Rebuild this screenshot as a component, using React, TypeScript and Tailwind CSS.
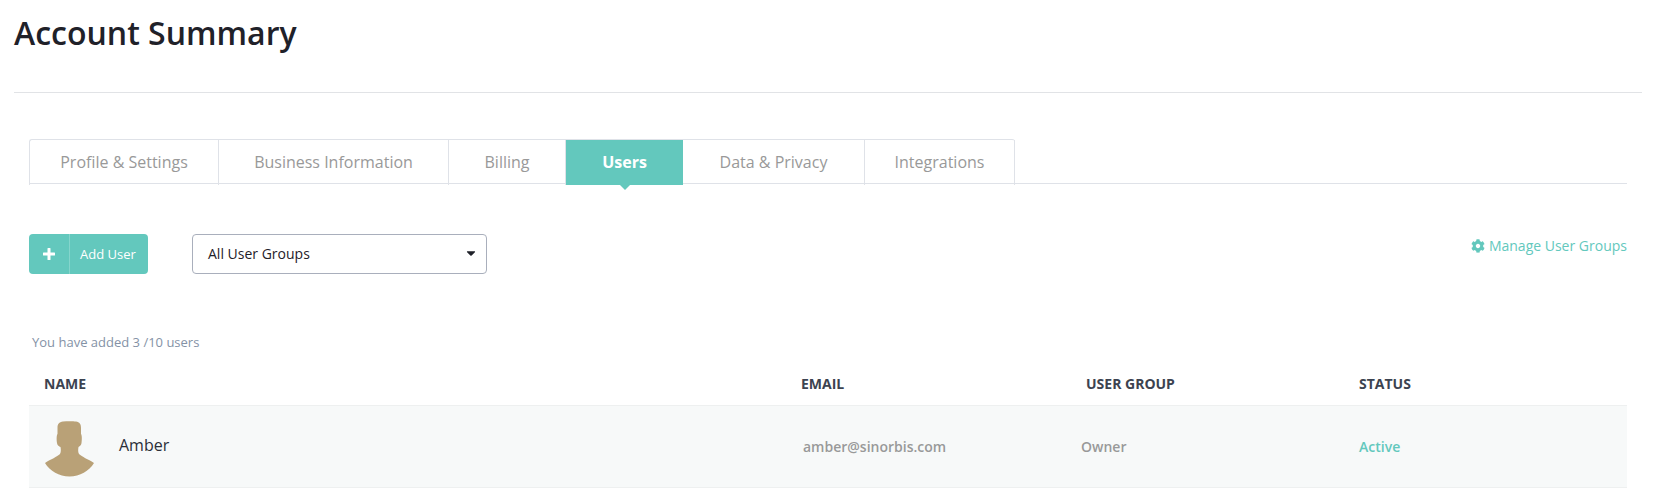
import { FaCog, FaCaretDown } from 'react-icons/fa';

const tabs = [
  { label: 'Profile & Settings', width: 'w-[189px]' },
  { label: 'Business Information', width: 'w-[230px]' },
  { label: 'Billing', width: 'w-[117px]' },
  { label: 'Users', width: 'w-[117px]', active: true },
  { label: 'Data & Privacy', width: 'w-[182px]' },
  { label: 'Integrations', width: 'w-[150px]' },
];

function Avatar() {
  return (
    <svg width="50" height="56" viewBox="0 0 50 56" className="block">
      <path
        d="M18 0.5 C22 0 28 0 31 0.5 C34.5 1 36 3 36 7 L36 13 C37 14 37 19 36.5 22 C36 25 34.5 25 33.5 26 C33 29 33 31 34 33 C37 36 43 38 49 42 C44 50 35 55.5 24.5 55.5 C14 55.5 5 50 0 42 C6 38 12 36 15 33 C16 31 16 29 15.5 26 C14 25 12.5 25 12 22 C11.5 19 11.5 14 12.5 13 L12.5 7 C12.5 3 14 1 18 0.5 Z"
        fill="#b9a177"
      />
    </svg>
  );
}

export default function App() {
  return (
    <div className="min-h-[489px] bg-white pl-[14px] pr-[12px] font-['Open_Sans',sans-serif]">
      <h1 className="pt-[11px] pb-[18px] text-[32px] leading-[44px] font-semibold text-[#1f2129] border-b border-[#e1e3e6] h-[93px]">
        Account Summary
      </h1>

      <div className="px-[15px]">
        <div className="mt-[46px] flex h-[45px] border-b border-[#dfe2e8]">
          <div className="flex h-[46px] rounded-t-[3px] border-t border-l border-[#dfe2e8]">
            {tabs.map((tab) =>
              tab.active ? (
                <div
                  key={tab.label}
                  className={`relative flex items-center justify-center bg-[#63c8bd] pb-[2px] text-[16px] font-bold text-white ${tab.width}`}
                >
                  {tab.label}
                  <span className="absolute left-1/2 top-full -ml-[5px] border-x-[5px] border-t-[5px] border-x-transparent border-t-[#63c8bd]" />
                </div>
              ) : (
                <div
                  key={tab.label}
                  className={`flex items-center justify-center border-r border-[#dfe2e8] pb-[2px] text-[16px] text-[#999999] ${tab.width}`}
                >
                  {tab.label}
                </div>
              ),
            )}
          </div>
        </div>

        <div className="mt-[50px] flex items-start justify-between">
          <div className="flex items-center gap-[44px]">
            <button className="flex h-[40px] w-[119px] items-center rounded-[4px] bg-[#63c8bd] text-[13px] text-white">
              <span className="flex h-full w-[41px] items-center justify-center border-r border-[#85d5cc]">
                <svg width="12" height="12" viewBox="0 0 12 12" fill="currentColor">
                  <path d="M4.5 0.5 Q4.5 0 5 0 H7 Q7.5 0 7.5 0.5 V4.5 H11.5 Q12 4.5 12 5 V7 Q12 7.5 11.5 7.5 H7.5 V11.5 Q7.5 12 7 12 H5 Q4.5 12 4.5 11.5 V7.5 H0.5 Q0 7.5 0 7 V5 Q0 4.5 0.5 4.5 H4.5 Z" />
                </svg>
              </span>
              <span className="pl-[10px] pt-[1px]">Add User</span>
            </button>
            <div className="flex h-[40px] w-[295px] items-center justify-between rounded-[4px] border border-[#a9afbc] pb-[2px] pl-[15px] pr-[8px] text-[14px] text-[#1f2129]">
              All User Groups
              <FaCaretDown size={14} className="text-[#1f2129]" />
            </div>
          </div>
          <a className="mt-[2px] flex items-center gap-[4px] text-[14px] leading-[20px] text-[#63c8bd]">
            <FaCog size={14} />
            Manage User Groups
          </a>
        </div>

        <p className="mt-[58px] pl-[3px] text-[13px] leading-[20px] text-[#8492a6]">You have added 3 /10 users</p>

        <div className="mt-[10px] grid h-[44px] grid-cols-[757px_285px_273px_1fr] items-center border-b border-[#eef0f0] pl-[15px] text-[14px] font-bold text-[#3c4350]">
          <span>NAME</span>
          <span>EMAIL</span>
          <span>USER GROUP</span>
          <span>STATUS</span>
        </div>

        <div className="grid h-[82px] grid-cols-[759px_278px_278px_1fr] items-center border-b border-[#eef0f0] bg-[#f7f9f9] pl-[15px]">
          <div className="flex items-center gap-[24px]">
            <div className="ml-[1px] pt-[5px]">
              <Avatar />
            </div>
            <span className="pb-[4px] text-[16px] text-[#2b2e38]">Amber</span>
          </div>
          <span className="text-[14px] font-semibold text-[#999999]">amber@sinorbis.com</span>
          <span className="text-[14px] font-semibold text-[#999999]">Owner</span>
          <span className="text-[14px] font-semibold text-[#63c8bd]">Active</span>
        </div>
      </div>
    </div>
  );
}
